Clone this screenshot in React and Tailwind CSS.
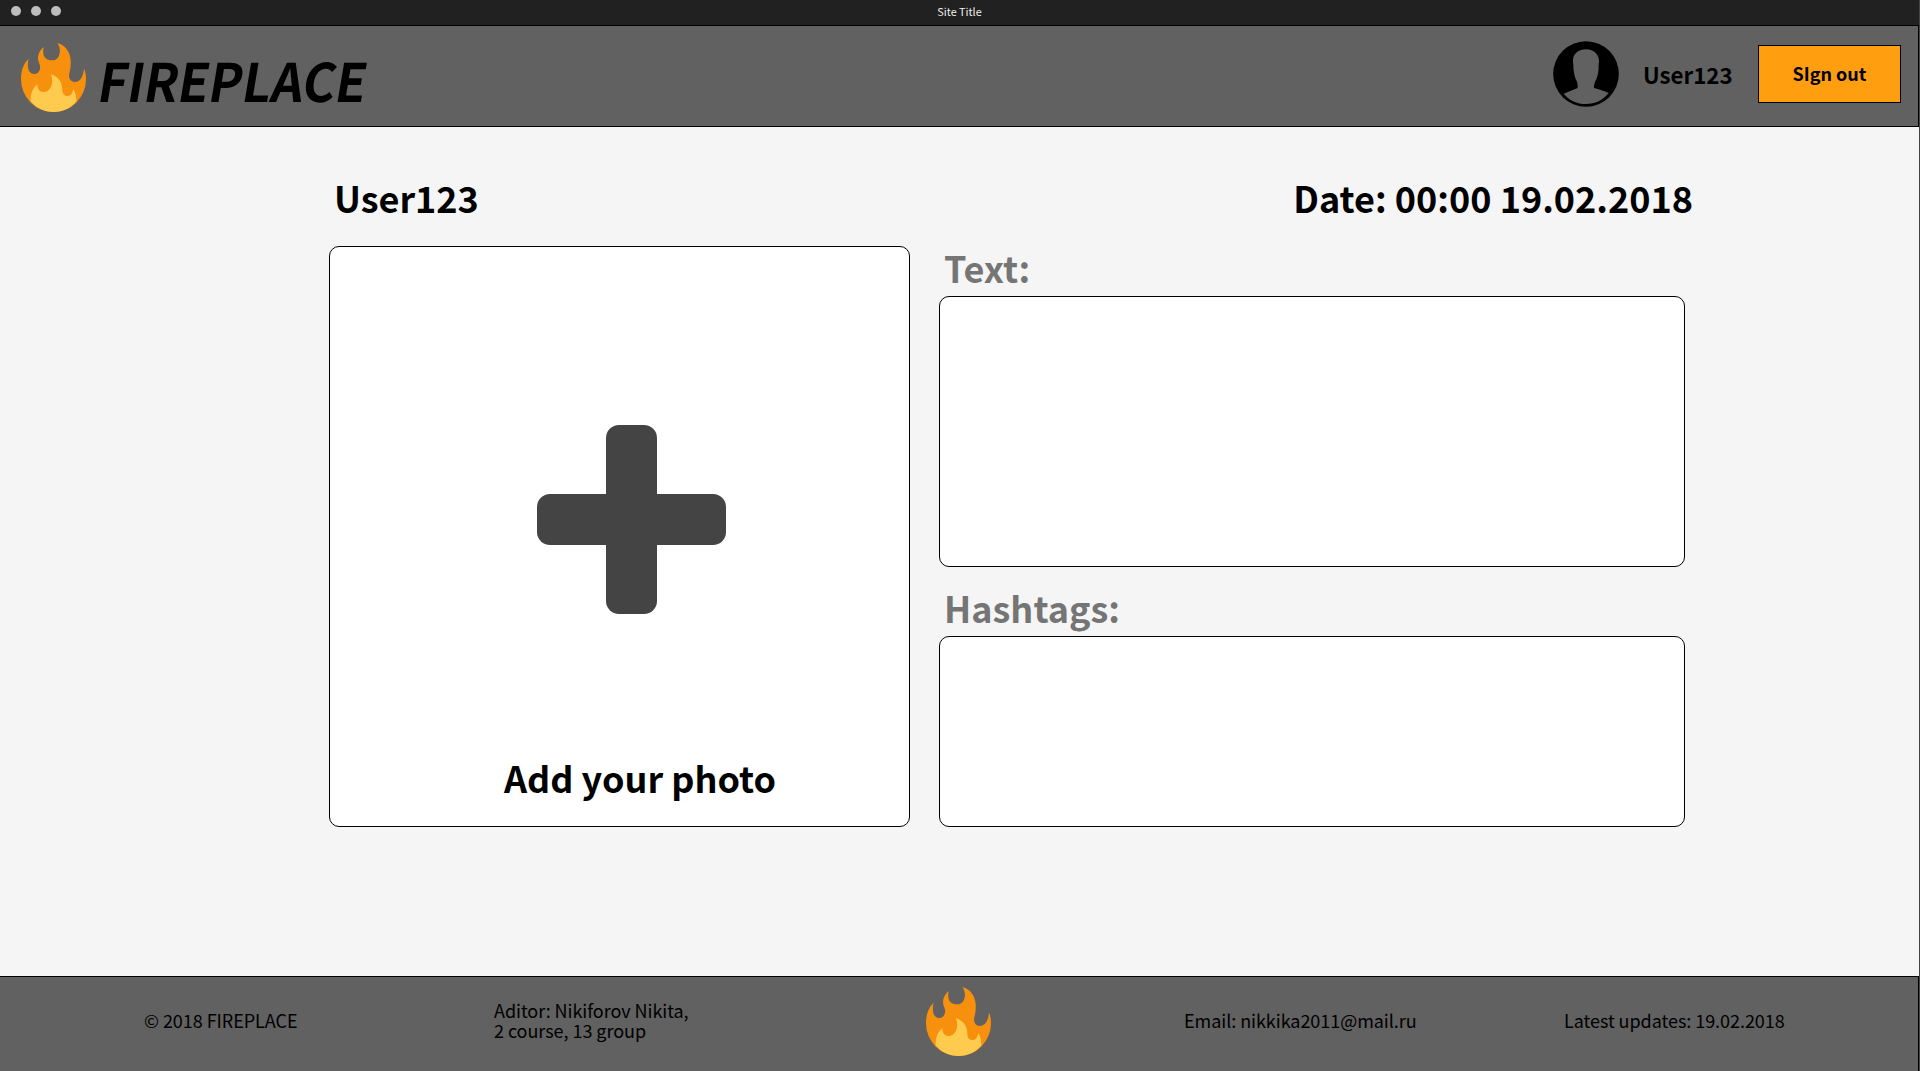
const FlameIcon = ({ className }) => (
  <svg viewBox="63 129 195 207" className={className} aria-hidden="true">
    <path
      fill="#f7900c"
      d="M86 176C66 194 63 222 63 238A97.5 98 0 0 0 258 238C258 225 256 213 252 206C250 232 238 246 225 246C212 246 205 235 208 220C212 205 213 192 212 180C210 155 195 135 172 129C180 140 182 155 177 167C173 177 165 181 156 181C140 181 131 173 130 160C129 152 130 147 131 141C117 152 112 168 115 182C118 192 122 196 120 206C117 218 110 222 102 222C92 222 85 213 84 201C83 190 84 182 86 176Z"
    />
    <path
      fill="#ffcb4f"
      d="M153 223C158 237 158 250 153 260C148 270 140 276 130 276C118 276 112 267 112 253C98 264 91 282 92 304C108 324 131 336 161 336C190 336 214 323 229 304C229 290 226 278 220 266C218 280 212 288 202 288C192 288 187 280 187 270C187 248 176 230 153 223Z"
    />
  </svg>
);

const AvatarIcon = ({ className }) => (
  <svg viewBox="99 123 198 198" className={className} aria-hidden="true">
    <circle cx="198" cy="222" r="98.5" fill="#000" />
    <path
      fill="#616161"
      d="M198 148C173 148 158 163 159 184C159 192 161 196 160 203C162 222 165 235 171 245C173 252 173 258 173 264L131 281C147 301 171 312 198 312C225 312 249 301 266 279C253 273 237 267 222 264C222 257 223 250 226 244C233 231 235 218 236 203C235 196 237 191 237 184C237 163 222 148 198 148Z"
    />
  </svg>
);

const PlusIcon = ({ className }) => (
  <svg viewBox="0 0 189 189" className={className} aria-hidden="true">
    <rect x="69" y="0" width="51" height="189" rx="13" fill="#444444" />
    <rect x="0" y="69" width="189" height="51" rx="13" fill="#444444" />
  </svg>
);

const Field = ({ label, className }) => (
  <label className="flex flex-col">
    <span className="ml-[5px] h-[50px] text-[36px] leading-[42px] font-bold text-[#757575]">{label}</span>
    <textarea className={`block w-full resize-none rounded-[10px] border border-black bg-white p-4 outline-none ${className}`} />
  </label>
);

export default function App() {
  return (
    <div className="flex h-[1071px] w-[1920px] flex-col overflow-hidden border-r border-[#444] bg-[#f5f5f5] font-['Noto_Sans_CJK_JP',sans-serif] text-black">
      <div className="grid h-[26px] shrink-0 grid-cols-3 items-start border-b border-black bg-[#212121]">
        <div className="flex gap-[10px] pt-[6px] pl-[10.5px]">
          <span className="size-[10px] rounded-full bg-[#bdbdbd]" />
          <span className="size-[10px] rounded-full bg-[#bdbdbd]" />
          <span className="size-[10px] rounded-full bg-[#bdbdbd]" />
        </div>
        <div className="text-center text-[10.8px] leading-[23px] text-[#eeeeee]">Site Title</div>
      </div>

      <header className="flex h-[101px] shrink-0 border-r border-b border-black bg-[#616161] pl-[21px]">
        <FlameIcon className="mt-[17px] h-[69px] w-[65px]" />
        <h1 className="mt-[13px] ml-[7px] h-[80px] origin-bottom-left scale-x-[0.945] -skew-x-[10deg] text-[53px] leading-[80px] font-bold">
          FIREPLACE
        </h1>
        <div className="ml-auto flex items-start pr-[17px]">
          <AvatarIcon className="mt-[15px] size-[66px]" />
          <span className="mt-[32px] ml-[24px] w-[91px] text-[22.3px] leading-[32px] font-bold">User123</span>
          <button className="mt-[19px] ml-[24px] h-[58px] w-[143px] border border-black bg-[#ff9e0f] pb-[2px] text-[18px] font-bold">
            SIgn out
          </button>
        </div>
      </header>

      <main className="ml-[329px] flex w-[1364px] flex-1 flex-col pt-[44px]">
        <div className="flex h-[75px] justify-between pl-[5px] text-[36px] leading-[52px] font-bold">
          <h2>User123</h2>
          <p>Date: 00:00 19.02.2018</p>
        </div>
        <div className="flex gap-[29px]">
          <button className="flex size-[581px] flex-col items-center rounded-[10px] border border-black bg-white pt-[178px] pl-[24px]">
            <PlusIcon className="size-[189px]" />
            <span className="mt-[137px] ml-[17px] text-[36px] leading-[52px] font-bold">Add your photo</span>
          </button>
          <div className="flex w-[746px] flex-col justify-between">
            <Field label="Text:" className="h-[271px]" />
            <Field label="Hashtags:" className="h-[191px]" />
          </div>
        </div>
      </main>

      <footer className="flex h-[95px] shrink-0 items-center border-t border-r border-black bg-[#616161] pb-[8px] text-[18px] leading-[20px] tracking-[-0.05px]">
        <p className="ml-[144px] w-[350px]">© 2018 FIREPLACE</p>
        <p className="w-[432px]">
          Aditor: Nikiforov Nikita,
          <br />2 course, 13 group
        </p>
        <FlameIcon className="mt-[10px] h-[69px] w-[65px] self-start" />
        <p className="ml-[193px] w-[380px]">Email: nikkika2011@mail.ru</p>
        <p>Latest updates: 19.02.2018</p>
      </footer>
    </div>
  );
}
